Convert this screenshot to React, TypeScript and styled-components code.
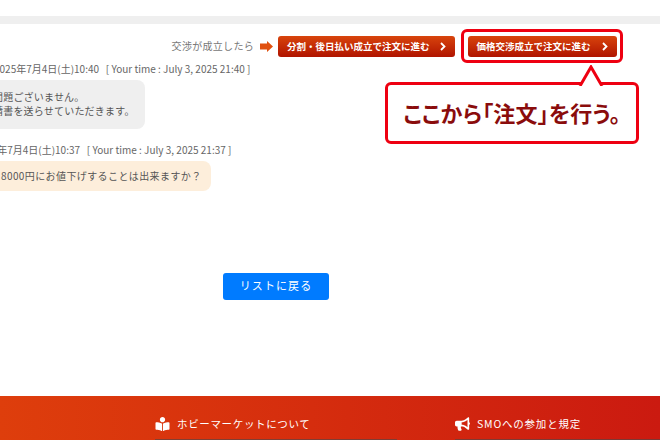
import React from "react";
import styled, { createGlobalStyle } from "styled-components";
import { FaBookReader, FaBullhorn } from "react-icons/fa";

const Global = createGlobalStyle`
  html, body { margin: 0; padding: 0; background: #fff; }
  body { width: 660px; height: 440px; overflow: hidden; font-family: "Noto Sans CJK JP", "Noto Sans", sans-serif; }
`;

const Page = styled.div`
  position: relative;
  width: 660px;
  height: 440px;
  overflow: hidden;
  display: flex;
  flex-direction: column;
`;

const TopRule = styled.div`
  height: 8px;
  margin-top: 16px;
  background: #efefef;
`;

const ActionBar = styled.div`
  display: flex;
  align-items: center;
  justify-content: flex-end;
  height: 34px;
  margin-top: 5px;
  padding-right: 37px;
`;

const Lead = styled.span`
  font-size: 10px;
  letter-spacing: 0.3px;
  color: #777;
  margin-right: 6px;
  padding-bottom: 1px;
`;

const ArrowIcon = styled.svg`
  width: 13px;
  height: 11px;
  margin-right: 5px;
  flex: none;
`;

const OrderButton = styled.a`
  display: flex;
  align-items: center;
  justify-content: space-between;
  box-sizing: border-box;
  width: ${(p) => p.$width}px;
  height: 21px;
  padding: 0 9px 0 ${(p) => p.$pad}px;
  border-radius: 3px;
  background: linear-gradient(#d8440c, #b01400);
  color: #fff;
  font-size: 9.5px;
  font-weight: 700;
  white-space: nowrap;
`;

const Highlight = styled.div`
  box-sizing: border-box;
  display: flex;
  align-items: center;
  justify-content: center;
  width: 162px;
  height: 34px;
  margin-left: 6px;
  border: 3px solid #ee0011;
  border-radius: 6px;
`;

const Chevron = styled.svg`
  width: 6px;
  height: 9px;
  flex: none;
`;

const Callout = styled.div`
  position: absolute;
  left: 385px;
  top: 82px;
  box-sizing: border-box;
  width: 254px;
  height: 62px;
  padding-bottom: 3px;
  display: flex;
  align-items: center;
  justify-content: center;
  background: #fff;
  border: 3px solid #ee0011;
  border-radius: 6px;
  color: #8a0c0c;
  font-size: 22px;
  font-weight: 700;
  font-feature-settings: "palt";
  letter-spacing: 0.2px;
  white-space: nowrap;
`;

const CalloutTip = styled.svg`
  position: absolute;
  left: 190px;
  top: -20px;
  width: 26px;
  height: 21px;
`;

const Thread = styled.div`
  display: flex;
  flex-direction: column;
  margin-top: -1px;
`;

const Message = styled.div`
  display: flex;
  flex-direction: column;
  align-items: flex-start;
  margin-bottom: ${(p) => p.$gap}px;
`;

const Stamp = styled.div`
  margin-left: ${(p) => p.$offset}px;
  height: 13px;
  line-height: 13px;
  font-size: 10px;
  color: #666;
  white-space: pre;
`;

const Bubble = styled.div`
  box-sizing: border-box;
  margin-top: 5px;
  margin-left: -20px;
  width: ${(p) => p.$width}px;
  height: ${(p) => p.$height}px;
  padding-left: ${(p) => p.$pad}px;
  padding-bottom: ${(p) => p.$lift}px;
  display: flex;
  flex-direction: column;
  justify-content: center;
  border-radius: 8px;
  background: ${(p) => p.$bg};
  color: #555;
  font-size: 10px;
  line-height: 14px;
  letter-spacing: ${(p) => p.$spacing}px;
  white-space: nowrap;
`;

const BackRow = styled.div`
  display: flex;
  position: absolute;
  left: 223px;
  top: 273px;
`;

const BackButton = styled.a`
  display: flex;
  align-items: center;
  justify-content: center;
  box-sizing: border-box;
  width: 106px;
  height: 27px;
  padding-bottom: 3px;
  border-radius: 3px;
  background: #007bff;
  color: #fff;
  font-size: 11px;
  letter-spacing: 1.1px;
`;

const Footer = styled.footer`
  margin-top: auto;
  height: 44px;
  box-sizing: border-box;
  padding: 20px 0 0 155px;
  display: grid;
  grid-template-columns: 300px 1fr;
  background: linear-gradient(90deg, #de3e0c, #cb1a10);
  color: #fff;
  font-size: 10.5px;
  line-height: 16px;
`;

const FooterItem = styled.div`
  display: flex;
  align-items: flex-start;
  gap: 7px;
  box-sizing: border-box;
  width: ${(p) => p.$width};
  height: 24px;
  border-bottom: 1px solid rgba(90, 70, 70, 0.7);
  letter-spacing: ${(p) => p.$spacing}px;
  svg { flex: none; width: 15px; height: 14px; margin-top: 1px; }
`;

const ChevronGlyph = () => (
  <Chevron viewBox="0 0 6 9">
    <path d="M1 1l3.5 3.5L1 8" fill="none" stroke="#fff" strokeWidth="1.8" />
  </Chevron>
);

export default function App() {
  return (
    <Page>
      <Global />
      <TopRule />
      <ActionBar>
        <Lead>交渉が成立したら</Lead>
        <ArrowIcon viewBox="0 0 13 11">
          <path d="M0 2.5h7V0l6 5.5L7 11V8.5H0z" fill="#e0500f" />
        </ArrowIcon>
        <OrderButton $width={177} $pad={9}>
          分割・後日払い成立で注文に進む
          <ChevronGlyph />
        </OrderButton>
        <Highlight>
          <OrderButton $width={149} $pad={9}>
            価格交渉成立で注文に進む
            <ChevronGlyph />
          </OrderButton>
        </Highlight>
      </ActionBar>
      <Callout>
        <CalloutTip viewBox="0 0 26 21">
          <path d="M2 21L13 2l11 19" fill="#fff" stroke="#ee0011" strokeWidth="3" strokeLinejoin="miter" />
        </CalloutTip>
        ここから「注文」を行う。
      </Callout>
      <Thread>
        <Message $gap={14}>
          <Stamp $offset={-6}>{"2025年7月4日(土)10:40   [ Your time : July 3, 2025 21:40 ]"}</Stamp>
          <Bubble $width={165} $height={49} $pad={13} $lift={2} $spacing={0.2} $bg="#efefef">
            <span>問題ございません。</span>
            <span>請書を送らせていただきます。</span>
          </Bubble>
        </Message>
        <Message $gap={0}>
          <Stamp $offset={-25}>{"2025年7月4日(土)10:37   [ Your time : July 3, 2025 21:37 ]"}</Stamp>
          <Bubble $width={231} $height={30} $pad={21} $lift={0} $spacing={0.4} $bg="#fdeedb">
            <span>8000円にお値下げすることは出来ますか？</span>
          </Bubble>
        </Message>
      </Thread>
      <BackRow>
        <BackButton>リストに戻る</BackButton>
      </BackRow>
      <Footer>
        <FooterItem $spacing={0.65} $width="242px">
          <FaBookReader />
          ホビーマーケットについて
        </FooterItem>
        <FooterItem $spacing={0.8} $width="100%">
          <FaBullhorn />
          SMOへの参加と規定
        </FooterItem>
      </Footer>
    </Page>
  );
}
